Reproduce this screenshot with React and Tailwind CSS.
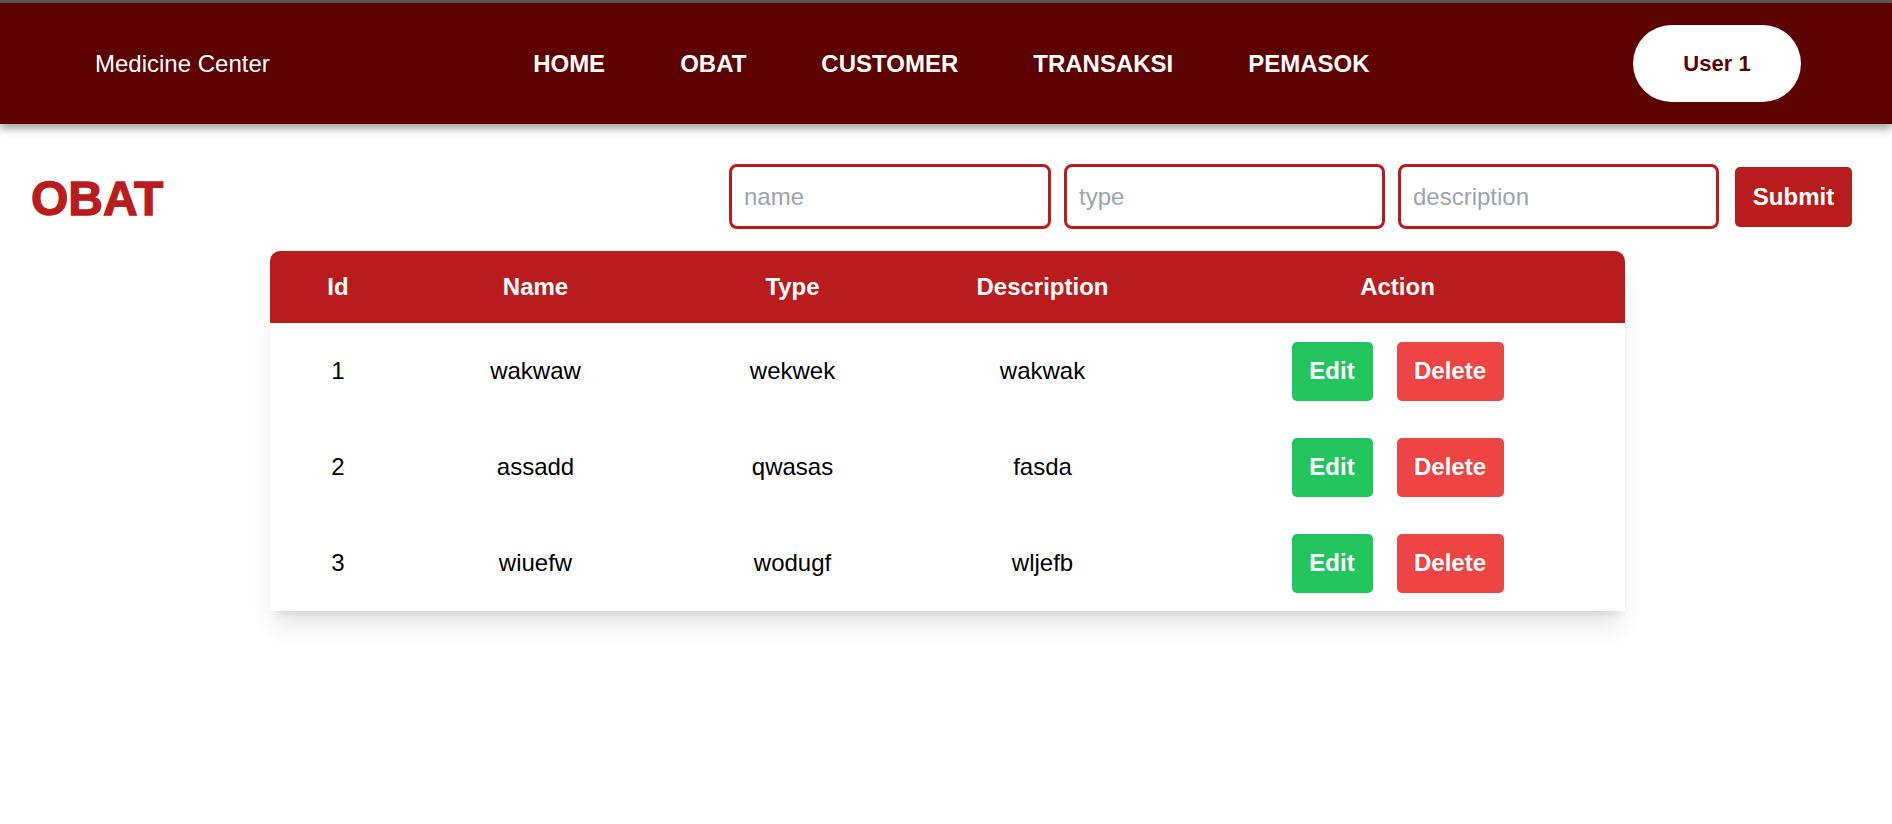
import React from "react";

const rows = [
  { id: 1, name: "wakwaw", type: "wekwek", desc: "wakwak" },
  { id: 2, name: "assadd", type: "qwasas", desc: "fasda" },
  { id: 3, name: "wiuefw", type: "wodugf", desc: "wljefb" },
];

export default function App() {
  return (
    <div
      className="min-h-screen bg-white text-black"
      style={{ fontFamily: '"Liberation Sans", Arial, sans-serif' }}
    >
      <div className="h-[3px] bg-[#5a5a5a]" />
      <nav className="relative z-10 flex h-[121px] items-center justify-between bg-[#5c0000] pl-[95px] pr-[91px] shadow-[0_5px_8px_rgba(0,0,0,0.35)]">
        <div className="text-[24px] text-white">Medicine Center</div>
        <div className="flex items-center gap-[75px] text-[24px] font-bold text-white">
          <a>HOME</a>
          <a>OBAT</a>
          <a>CUSTOMER</a>
          <a>TRANSAKSI</a>
          <a>PEMASOK</a>
        </div>
        <button className="flex h-[77px] w-[168px] items-center justify-center rounded-full bg-white text-[22px] font-bold text-[#5c0000]">
          User 1
        </button>
      </nav>

      <div className="mt-[40px] flex items-center justify-between pl-[31px] pr-[40px]">
        <h1 className="mt-[4px] text-[48px] font-black leading-none text-[#b91c1c] [-webkit-text-stroke:1.3px_#b91c1c]">
          OBAT
        </h1>
        <form className="flex items-center gap-[13px]" onSubmit={(e) => e.preventDefault()}>
          <input
            placeholder="name"
            className="h-[65px] w-[322px] rounded-[8px] border-[3px] border-[#b91c1c] px-[12px] text-[24px] outline-none placeholder:text-[#9ca3af]"
          />
          <input
            placeholder="type"
            className="h-[65px] w-[321px] rounded-[8px] border-[3px] border-[#b91c1c] px-[12px] text-[24px] outline-none placeholder:text-[#9ca3af]"
          />
          <input
            placeholder="description"
            className="h-[65px] w-[321px] rounded-[8px] border-[3px] border-[#b91c1c] px-[12px] text-[24px] outline-none placeholder:text-[#9ca3af]"
          />
          <button className="ml-[3px] h-[60px] w-[117px] rounded-[5px] bg-[#b91c1c] text-[24px] font-bold text-white">
            Submit
          </button>
        </form>
      </div>

      <div className="ml-[270px] mt-[22px] w-[1355px] overflow-hidden rounded-t-[10px] bg-white shadow-xl">
        <table className="w-full table-fixed border-collapse text-[24px]">
          <colgroup>
            <col className="w-[136px]" />
            <col className="w-[259px]" />
            <col className="w-[255px]" />
            <col className="w-[245px]" />
            <col className="w-[460px]" />
          </colgroup>
          <thead>
            <tr className="h-[72px] bg-[#b91c1c] font-bold text-white">
              <th className="text-center">Id</th>
              <th className="text-center">Name</th>
              <th className="text-center">Type</th>
              <th className="text-center">Description</th>
              <th className="pl-[5px] text-center">Action</th>
            </tr>
          </thead>
          <tbody>
            {rows.map((r) => (
              <tr key={r.id} className="h-[96px]">
                <td className="text-center">{r.id}</td>
                <td className="text-center">{r.name}</td>
                <td className="text-center">{r.type}</td>
                <td className="text-center">{r.desc}</td>
                <td className="pl-[5px]">
                  <div className="flex items-center justify-center gap-[24px]">
                    <button className="h-[59px] w-[81px] rounded-[5px] bg-[#22c55e] text-[24px] font-bold text-white">
                      Edit
                    </button>
                    <button className="h-[59px] w-[107px] rounded-[5px] bg-[#ef4444] text-[24px] font-bold text-white">
                      Delete
                    </button>
                  </div>
                </td>
              </tr>
            ))}
          </tbody>
        </table>
      </div>
    </div>
  );
}
